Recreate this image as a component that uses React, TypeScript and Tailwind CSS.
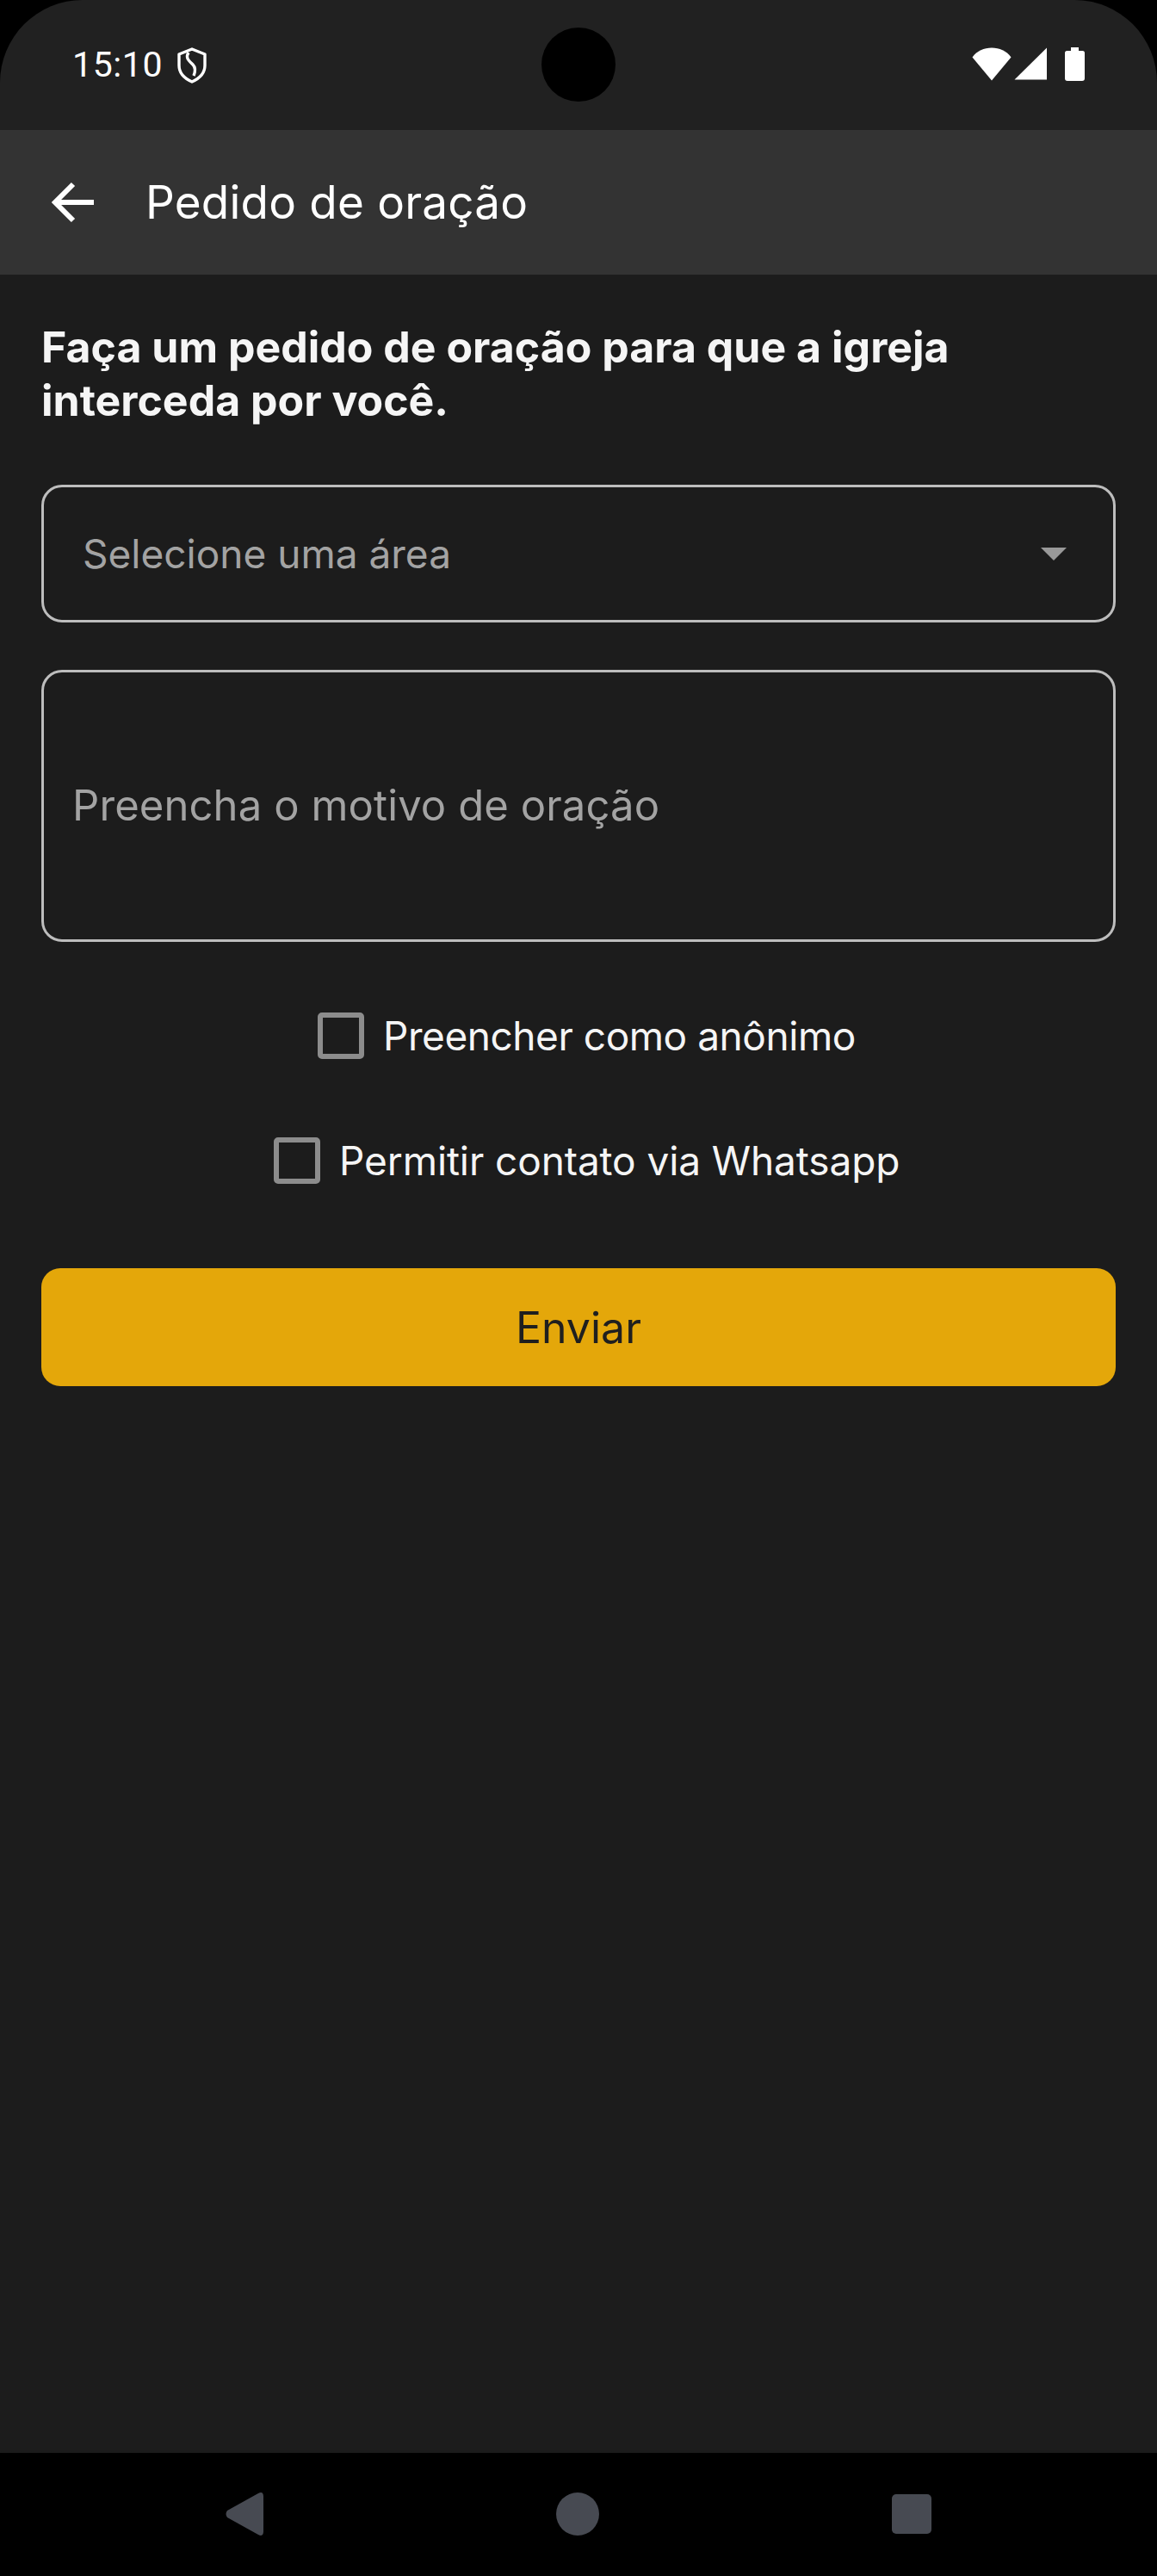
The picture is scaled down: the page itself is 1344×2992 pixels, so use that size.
import React from "react";

const font = { fontFamily: "Inter, sans-serif" };

const Check: React.FC<{ label: string; className: string; textClass: string }> = ({ label, className, textClass }) => (
  <div className={`flex items-center ${className}`}>
    <div className="w-[54px] h-[54px] rounded-[5px] border-[6px] border-[#8c8c8c] shrink-0" />
    <span className={`ml-[22px] text-[46px] leading-[56px] text-[#f5f5f5] whitespace-nowrap ${textClass}`}>
      {label}
    </span>
  </div>
);

const StatusBar: React.FC = () => (
  <div className="relative h-[151px] shrink-0 bg-[#212121] rounded-t-[96px] flex items-start justify-between pl-[84px] pr-[84px] pt-[50px]">
    <div className="flex items-center">
      <span className="text-[41px] leading-[50px] text-white font-['Roboto',sans-serif] tracking-[0.6px]">15:10</span>
      <svg className="ml-[17px] mt-[2px]" width="34" height="42" viewBox="0 0 34 42" fill="none" stroke="#fff" strokeWidth="3.4" strokeLinejoin="round">
        <path d="M17 2 32 8v13c0 8.500-6 15-15 19C8 36 2 29.500 2 21V8Z" />
        <path d="M13 6c-4 6 0 9 5 14 3 3 3 8 1 13" />
      </svg>
    </div>
    <div className="w-[86px] h-[86px] rounded-full bg-black absolute left-[629px] top-[32px]" />
    <div className="flex items-start pt-[5px]">
      <svg width="46" height="39" viewBox="0 0 46 39" fill="#fff">
        <path d="M23 38.500 0.500 11.500C6 4 14 0.500 23 0.500S40 4 45.500 11.500Z" />
      </svg>
      <svg className="ml-[3px]" width="38" height="38" viewBox="0 0 38 38" fill="#fff">
        <path d="M38 0.500V37.500H0.500Z" />
      </svg>
      <svg className="ml-[21px]" width="23" height="39" viewBox="0 0 23 39" fill="#fff">
        <path d="M7 0h9v4h4.500Q23 4 23 6.500V36q0 3-3 3H3q-3 0-3-3V6.500Q0 4 2.500 4H7Z" />
      </svg>
    </div>
  </div>
);

const AppBar: React.FC = () => (
  <div className="h-[168px] shrink-0 bg-[#333333] flex items-center pl-[60px]">
    <svg width="50" height="48" viewBox="0 0 50 48" fill="none" stroke="#fff" strokeWidth="6">
      <path d="M49 24H5M25 3 4 24l21 21" />
    </svg>
    <h1 className="ml-[59px] text-[53px] leading-[64px] text-white tracking-[0.2px] font-normal">Pedido de oração</h1>
  </div>
);

const NavBar: React.FC = () => (
  <div className="h-[143px] shrink-0 bg-black flex items-start justify-between pl-[262px] pr-[262px] pt-[46px]">
    <svg width="44" height="50" viewBox="0 0 44 50" fill="#474a52">
      <path d="M38 1q6-3 6 4v40q0 7-6 4L2 29q-3-4 0-8Z" />
    </svg>
    <div className="w-[50px] h-[50px] rounded-full bg-[#474a52]" />
    <div className="w-[46px] h-[46px] mt-[2px] rounded-[5px] bg-[#474a52]" />
  </div>
);

export default function App() {
  return (
    <div className="w-[1344px] h-[2992px] bg-black flex flex-col overflow-hidden" style={font}>
      <StatusBar />
      <AppBar />
      <main className="flex-1 bg-[#1c1c1c] px-[48px] pt-[53px]">
        <p className="text-[50px] leading-[62px] font-bold text-[#f5f5f5]">
          Faça um pedido de oração para que a igreja
          <br />
          interceda por você.
        </p>

        <div className="mt-[67px] h-[160px] rounded-[24px] border-[3px] border-[#bdbdbd] flex items-center justify-between pl-[45px] pr-[54px]">
          <span className="text-[46px] leading-[56px] text-[#a3a3a3]">Selecione uma área</span>
          <div className="w-0 h-0 border-x-[15px] border-x-transparent border-t-[15px] border-t-[#999999]" />
        </div>

        <div className="mt-[55px] h-[316px] rounded-[24px] border-[3px] border-[#bdbdbd] flex items-center pl-[33px]">
          <span className="text-[49px] leading-[56px] text-[#a3a3a3] tracking-[0.1px]">Preencha o motivo de oração</span>
        </div>

        <Check label="Preencher como anônimo" textClass="tracking-[-0.45px]" className="mt-[81px] pl-[321px]" />
        <Check label="Permitir contato via Whatsapp" textClass="tracking-[-0.1px]" className="mt-[89px] pl-[270px]" />

        <button className="mt-[97px] w-full h-[137px] rounded-[22px] bg-[#e4a70a] text-[#1f1f1f] text-[50px] leading-[60px]">
          Enviar
        </button>
      </main>
      <NavBar />
    </div>
  );
}
